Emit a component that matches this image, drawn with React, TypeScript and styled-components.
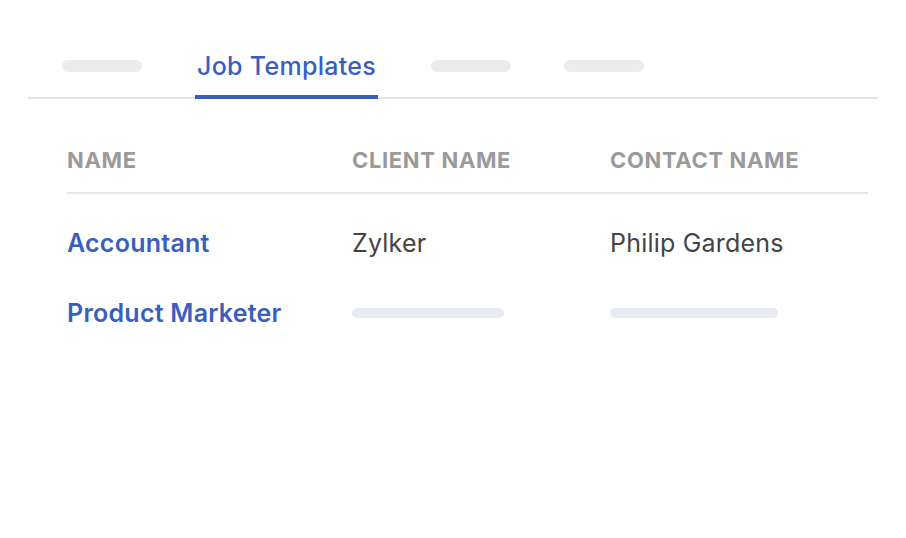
import React from "react";
import styled, { createGlobalStyle } from "styled-components";

const Global = createGlobalStyle`
  html, body { margin: 0; padding: 0; background: #ffffff; }
  body { font-family: Inter, "Noto Sans", sans-serif; }
`;

const Page = styled.div`
  width: 906px;
  height: 538px;
  box-sizing: border-box;
  padding: 40px 28px 0 28px;
  background: #fff;
`;

const TabBar = styled.div`
  display: flex;
  align-items: center;
  height: 59px;
  padding-left: 34px;
  border-bottom: 2px solid #e4e4e4;
  box-sizing: border-box;
  gap: 53px;
`;

const Placeholder = styled.div<{ $w: number }>`
  width: ${(p) => p.$w}px;
  height: 12px;
  border-radius: 6px;
  background: #ececec;
  margin-top: -6px;
`;

const ActiveTab = styled.div`
  align-self: stretch;
  display: flex;
  align-items: center;
  padding: 0 2px 4px 2px;
  margin-bottom: -2px;
  border-bottom: 4px solid #3a5ec0;
  font-size: 25px;
  font-weight: 500;
  color: #3a5ec0;
  letter-spacing: 0.3px;
  box-sizing: border-box;
`;

const Table = styled.div`
  margin: 0 10px 0 39px;
  display: grid;
  grid-template-columns: 285px 258px 1fr;
`;

const HeaderCell = styled.div`
  font-size: 22px;
  font-weight: 700;
  color: #9a9a9a;
  letter-spacing: 0.65px;
  height: 95px;
  display: flex;
  align-items: center;
  padding-top: 29px;
  box-sizing: border-box;
  border-bottom: 2px solid #e6e6e6;
`;

const Cell = styled.div<{ $blue?: boolean; $h: number }>`
  height: ${(p) => p.$h}px;
  display: flex;
  align-items: center;
  font-size: 25px;
  font-weight: ${(p) => (p.$blue ? 600 : 400)};
  color: ${(p) => (p.$blue ? "#3a5ec0" : "#444444")};
  letter-spacing: ${(p) => (p.$blue ? "0.25px" : "0.2px")};
`;

const Bar = styled.div<{ $w: number }>`
  width: ${(p) => p.$w}px;
  height: 10px;
  border-radius: 5px;
  background: #e8ecf2;
`;

export default function App() {
  return (
    <>
      <Global />
      <Page>
        <TabBar>
          <Placeholder $w={80} />
          <ActiveTab>Job Templates</ActiveTab>
          <Placeholder $w={80} />
          <Placeholder $w={80} />
        </TabBar>
        <Table>
          <HeaderCell>NAME</HeaderCell>
          <HeaderCell>CLIENT NAME</HeaderCell>
          <HeaderCell>CONTACT NAME</HeaderCell>
          <Cell $blue $h={97}>Accountant</Cell>
          <Cell $h={97}>Zylker</Cell>
          <Cell $h={97}>Philip Gardens</Cell>
          <Cell $blue $h={44}>Product Marketer</Cell>
          <Cell $h={44}><Bar $w={152} /></Cell>
          <Cell $h={44}><Bar $w={168} /></Cell>
        </Table>
      </Page>
    </>
  );
}
